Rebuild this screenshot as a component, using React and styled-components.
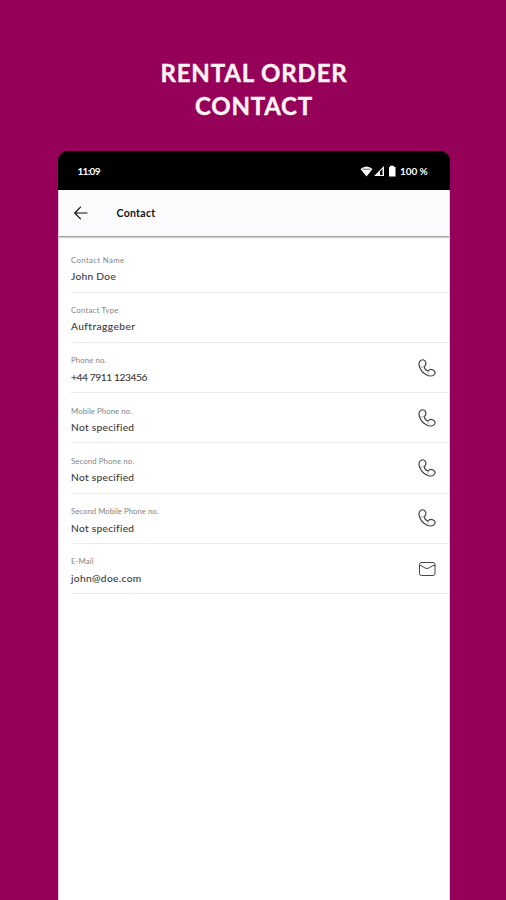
import React from 'react';
import styled, { createGlobalStyle } from 'styled-components';

const GlobalStyle = createGlobalStyle`
  * { box-sizing: border-box; }
  body { margin: 0; background: #950059; font-family: Lato, sans-serif; }
`;

const Page = styled.main`
  height: 900px;
  display: flex;
  flex-direction: column;
  align-items: center;
  overflow: hidden;
  background: #950059;
`;

const Title = styled.h1`
  margin: 0;
  height: 151px;
  padding-top: 57px;
  font-size: 24px;
  line-height: 32.5px;
  font-weight: 700;
  text-align: center;
  color: #fff3f3;
  -webkit-text-stroke: 0.4px #fff3f3;
`;

const TitleLine = styled.span`
  display: block;
  padding-left: 2px;
  letter-spacing: ${(p) => p.$spacing};
`;

const Phone = styled.section`
  width: 392px;
  margin-left: 1px;
  flex: 1;
  display: flex;
  flex-direction: column;
  background: linear-gradient(#000 30px, #fff 30px);
  border-radius: 10px 10px 0 0;
  overflow: hidden;
`;

const StatusBar = styled.div`
  height: 39px;
  padding: 0 22px 0 20px;
  display: flex;
  align-items: center;
  justify-content: space-between;
  background: #000;
  color: #fff;
  font-size: 10px;
  line-height: 12px;
  font-weight: 700;
`;

const Clock = styled.span`
  letter-spacing: -0.7px;
`;

const StatusIcons = styled.div`
  display: flex;
  align-items: center;
`;

const Battery = styled.span`
  margin-left: 2px;
  letter-spacing: -0.12px;
`;

const Header = styled.header`
  height: 46px;
  padding: 0 0 0 15px;
  display: flex;
  align-items: center;
  gap: 28px;
  background: #fbfbfd;
  border-left: 1px solid #e5cbd9;
  border-right: 1px solid #e5cbd9;
  box-shadow: 0 1px 2px rgba(0, 0, 0, 0.55);
  font-size: 10.5px;
  font-weight: 700;
  color: #151515;
`;

const HeaderText = styled.span`
  margin-left: -1px;
  letter-spacing: 0.3px;
`;

const List = styled.div`
  flex: 1;
  padding: 6.3px 0 0 12px;
  border-left: 1px solid #e5cbd9;
  border-right: 1px solid #e5cbd9;
`;

const Row = styled.div`
  height: 50.3px;
  display: flex;
  align-items: center;
  justify-content: space-between;
  padding: 4px 13px 0 0;
  border-bottom: 1px solid #ececec;
`;

const Field = styled.div`
  display: flex;
  flex-direction: column;
  gap: 4.500px;
`;

const Label = styled.span`
  margin-left: 0.5px;
  font-size: 7.8px;
  line-height: 10px;
  color: #858585;
  letter-spacing: ${(p) => p.$spacing};
  white-space: nowrap;
`;

const Value = styled.span`
  margin-left: 0.5px;
  font-size: 10.2px;
  line-height: 14px;
  color: #3a3a3a;
  -webkit-text-stroke: 0.1px #3a3a3a;
  letter-spacing: ${(p) => p.$spacing};
  white-space: nowrap;
`;

const Icon = styled.svg`
  display: block;
  flex: none;
  fill: none;
  stroke: #444;
  stroke-width: ${(p) => p.$weight || 1.2};
  stroke-linecap: round;
  stroke-linejoin: round;
`;

const Action = styled.div`
  padding-bottom: 4px;
`;

function PhoneIcon() {
  return (
    <Icon width="18" height="18" viewBox="0 0 18 18">
      <path d="M3 1.200C4.800.200 6.700 1 7.500 2.800C8.300 4.800 7.900 6.500 6.300 7.600C6.500 9.400 8.300 11.500 10.200 12C11.200 10.400 13.200 10 15.200 11C17 11.900 17.500 13.500 16.600 15C15 17.500 11.400 17.700 7.800 15.500C4.700 13.600 2.600 11 1.500 7.700C.6 4.900.9 2.400 3 1.200Z" />
      <path d="M2.800 7.900Q4.600 8.600 6.300 7.600M10.200 12Q9.200 13.600 10.100 15" stroke="#777" strokeWidth=".6" />
    </Icon>
  );
}

function MailIcon() {
  return (
    <Icon width="18" height="18" viewBox="0 0 18 18" $weight={1}>
      <rect x="1.500" y="2.500" width="15.500" height="13" rx="2" />
      <path d="M1.500 5.500H3L7 8Q9 9 11 8L15 5.500H17" />
    </Icon>
  );
}

const fields = [
  { label: 'Contact Name', value: 'John Doe', ls: '0.35px', vs: '0.3px' },
  { label: 'Contact Type', value: 'Auftraggeber', ls: '0.2px', vs: '0.45px' },
  { label: 'Phone no.', value: '+44 7911 123456', ls: '0.1px', vs: '-0.4px', icon: PhoneIcon },
  { label: 'Mobile Phone no.', value: 'Not specified', ls: '0.05px', vs: '0.3px', icon: PhoneIcon },
  { label: 'Second Phone no.', value: 'Not specified', ls: '0.1px', vs: '0.3px', icon: PhoneIcon },
  { label: 'Second Mobile Phone no.', value: 'Not specified', ls: '0.01px', vs: '0.3px', icon: PhoneIcon },
  { label: 'E-Mail', value: 'john@doe.com', ls: '0.1px', vs: '0.35px', icon: MailIcon },
];

export default function App() {
  return (
    <Page>
      <GlobalStyle />
      <Title>
        <TitleLine $spacing="0.85px">RENTAL ORDER</TitleLine>
        <TitleLine $spacing="0.75px">CONTACT</TitleLine>
      </Title>
      <Phone>
        <StatusBar>
          <Clock>11:09</Clock>
          <StatusIcons>
            <svg width="38" height="12" viewBox="0 0 38 12" fill="#fff">
              <path d="M.5 4Q6.500-1 12.500 4L6.500 11.500Z" />
              <path d="M2.500 4.200H10.500" stroke="#000" strokeWidth=".6" />
              <path d="M14 11L24 1V11ZM20 6.500V10H22.500V4Z" fillRule="evenodd" />
              <path d="M30 2V.8H34V2H35.500V11.500H29V2Z" />
            </svg>
            <Battery>100 %</Battery>
          </StatusIcons>
        </StatusBar>
        <Header>
          <Icon width="16" height="14" viewBox="0 0 16 14">
            <path d="M13 7H.8M6.500 1.200L.8 7L6.500 12.800" stroke="#111" />
          </Icon>
          <HeaderText>Contact</HeaderText>
        </Header>
        <List>
          {fields.map(({ label, value, ls, vs, icon: Glyph }) => (
            <Row key={label}>
              <Field>
                <Label $spacing={ls}>{label}</Label>
                <Value $spacing={vs}>{value}</Value>
              </Field>
              {Glyph && (
                <Action>
                  <Glyph />
                </Action>
              )}
            </Row>
          ))}
        </List>
      </Phone>
    </Page>
  );
}
